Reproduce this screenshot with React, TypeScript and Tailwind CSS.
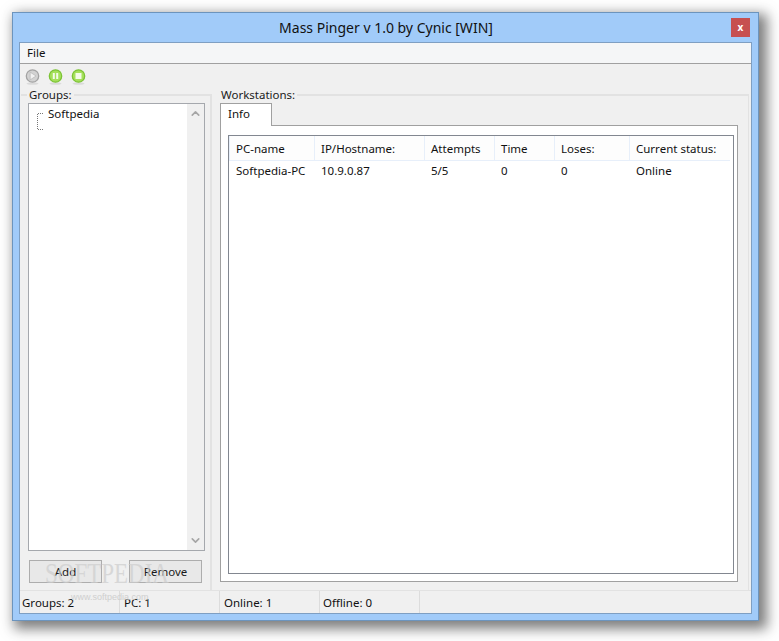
import { ChevronDown, ChevronUp } from 'lucide-react';

const columns = [
  { name: 'PC-name', value: 'Softpedia-PC', width: 'w-[85px]' },
  { name: 'IP/Hostname:', value: '10.9.0.87', width: 'w-[110px]' },
  { name: 'Attempts', value: '5/5', width: 'w-[70px]' },
  { name: 'Time', value: '0', width: 'w-[60px]' },
  { name: 'Loses:', value: '0', width: 'w-[75px]' },
  { name: 'Current status:', value: 'Online', width: 'w-[101px]' },
];

const statusCells = [
  { label: 'Groups: 2', width: 'w-[100px]', pad: 'pl-[2px]' },
  { label: 'PC: 1', width: 'w-[100px]', pad: 'pl-[4px]' },
  { label: 'Online: 1', width: 'w-[100px]', pad: 'pl-[4px]' },
  { label: 'Offline: 0', width: 'w-[100px]', pad: 'pl-[3px]' },
];

function RoundIcon({ kind }: { kind: 'play' | 'pause' | 'stop' }) {
  const green = kind !== 'play';
  return (
    <svg width="15" height="16" viewBox="0 0 15 16">
      <ellipse cx="7.5" cy="14.6" rx="6" ry="1.2" fill="#dadada" />
      <circle cx="7.5" cy="7" r="6.2" fill={green ? '#a5e05a' : '#d2d2d2'} stroke={green ? '#7cc336' : '#a3a3a3'} strokeWidth="1.3" />
      {kind === 'play' && <path d="M5.2 3.2 L11 7 L5.2 10.8 Z" fill="#f2f2f2" stroke="#b0b0b0" strokeWidth="0.6" />}
      {kind === 'pause' && (
        <>
          <rect x="4.8" y="4" width="2" height="6" fill="#f4fbe9" />
          <rect x="8.2" y="4" width="2" height="6" fill="#f4fbe9" />
        </>
      )}
      {kind === 'stop' && <rect x="4.5" y="4" width="6" height="6" fill="#f4fbe9" />}
    </svg>
  );
}

function GroupBox({ title, className, titleClass, children }: { title: string; className: string; titleClass: string; children: React.ReactNode }) {
  return (
    <div className={`relative border-2 border-[#e2e2e2] ${className}`}>
      <span className={`absolute -top-[9px] bg-[#f0f0f0] px-[2px] leading-[16px] text-[#1a1a1a] ${titleClass}`}>{title}</span>
      {children}
    </div>
  );
}

function Button({ label }: { label: string }) {
  return (
    <button className="h-[23px] w-[73px] border border-[#adadad] bg-[#e8e8e8] pt-[1px] text-[11.5px] leading-[20px] text-[#1a1a1a]">
      {label}
    </button>
  );
}

export default function App() {
  return (
    <div className="h-[641px] w-[779px] bg-white pl-[12px] pt-[12px] font-['Noto_Sans',sans-serif] text-[11.5px] text-[#111]">
      <div className="flex h-[609px] w-[747px] flex-col border border-[#6c94bd] bg-[#a1cbf9] px-[6px] pb-[6px] shadow-[5px_5px_12px_3px_rgba(40,40,40,0.6)]">
        <div className="relative flex h-[29px] shrink-0 items-center justify-center pl-[1px] text-[14px] text-[#111]">
          Mass Pinger v 1.0 by Cynic [WIN]
          <div className="absolute right-[2px] top-[5px] flex h-[19px] w-[19px] items-center justify-center bg-[#c75050] pb-[1px] text-[10px] font-bold leading-none text-white">
            x
          </div>
        </div>
        <div className="relative flex min-h-0 flex-1 flex-col border border-[#7f9fc2] bg-[#f0f0f0]">
          <div className="flex h-[21px] shrink-0 items-center border-b border-[#a0a0a0] bg-[#f5f6f7] pl-[7px]">File</div>
          <div className="flex h-[23px] shrink-0 items-center gap-[8px] pl-[5px] pt-[2px]">
            <RoundIcon kind="play" />
            <RoundIcon kind="pause" />
            <RoundIcon kind="stop" />
          </div>
          <div className="flex min-h-0 flex-1 items-stretch pl-[1px] pr-[2px] pt-[7px]">
            <GroupBox title="Groups:" titleClass="left-[6px]" className="flex w-[191px] shrink-0 flex-col border-b-0 border-l-0 pl-[7px] pt-[7px]">
              <div className="flex h-[448px] w-[177px] border border-[#a5a8ad] bg-white">
                <div className="relative flex-1 pl-[19px] leading-[19px]">
                  <svg className="absolute left-[8px] top-[9px]" width="8" height="18" viewBox="0 0 8 18">
                    <path d="M0.5 0.5 H7 M0.5 0.5 V16.5 H7" fill="none" stroke="#777" strokeDasharray="1 1" shapeRendering="crispEdges" />
                  </svg>
                  Softpedia
                </div>
                <div className="flex w-[17px] flex-col items-center justify-between bg-[#f0f0f0] py-[3px] text-[#a6a6a6]">
                  <ChevronUp size={13} strokeWidth={3} />
                  <ChevronDown size={13} strokeWidth={3} />
                </div>
              </div>
              <div className="flex w-[177px] justify-between pl-[1px] pr-[3px] pt-[9px]">
                <Button label="Add" />
                <Button label="Remove" />
              </div>
            </GroupBox>
            <GroupBox title="Workstations:" titleClass="-left-[1px]" className="ml-[8px] flex min-w-0 flex-1 flex-col border-b-0 border-l-0 border-r-[1px] pb-[8px] pt-[7px]">
              <div className="flex h-[22px] shrink-0">
                <div className="z-10 -mb-[1px] flex h-[23px] w-[52px] items-start border border-b-0 border-[#a0a0a0] bg-white pl-[7px] pt-[1px] leading-[17px]">
                  Info
                </div>
              </div>
              <div className="mr-[10px] flex-1 border border-[#a0a0a0] bg-white px-[7px] pb-[7px] pt-[9px]">
                <div className="h-full w-[506px] border border-[#828790] bg-white">
                  <div className="flex h-[25px] w-[501px] border-b border-[#e7effa]">
                    {columns.map((c) => (
                      <div key={c.name} className={`${c.width} flex items-center border-l border-[#e7effa] bg-[#fdfdfd] pl-[6px] pt-[1px]`}>
                        {c.name}
                      </div>
                    ))}
                  </div>
                  <div className="flex h-[19px] w-[501px]">
                    {columns.map((c) => (
                      <div key={c.name} className={`${c.width} flex items-center pl-[7px]`}>
                        {c.value}
                      </div>
                    ))}
                  </div>
                </div>
              </div>
            </GroupBox>
          </div>
          <div className="flex h-[23px] shrink-0 border-t border-[#e2e2e2] bg-[#f0f0f0]">
            {statusCells.map((s) => (
              <div key={s.label} className={`${s.width} ${s.pad} flex items-center border-r border-[#dcdcdc] pt-[2px]`}>
                {s.label}
              </div>
            ))}
          </div>
          {/* softpedia watermark over the buttons */}
          <div className="pointer-events-none absolute left-[25px] top-[518px] text-[#cdcdcd] opacity-70">
            <div className="scale-y-[1.25] font-['Liberation_Serif',serif] text-[23px] leading-[26px]">SOFTPEDIA</div>
          </div>
          <div className="pointer-events-none absolute left-[51px] top-[548px] font-['Liberation_Sans',sans-serif] text-[9px] leading-[12px] text-[#cfcfcf]">
            www.softpedia.com
          </div>
        </div>
      </div>
    </div>
  );
}
